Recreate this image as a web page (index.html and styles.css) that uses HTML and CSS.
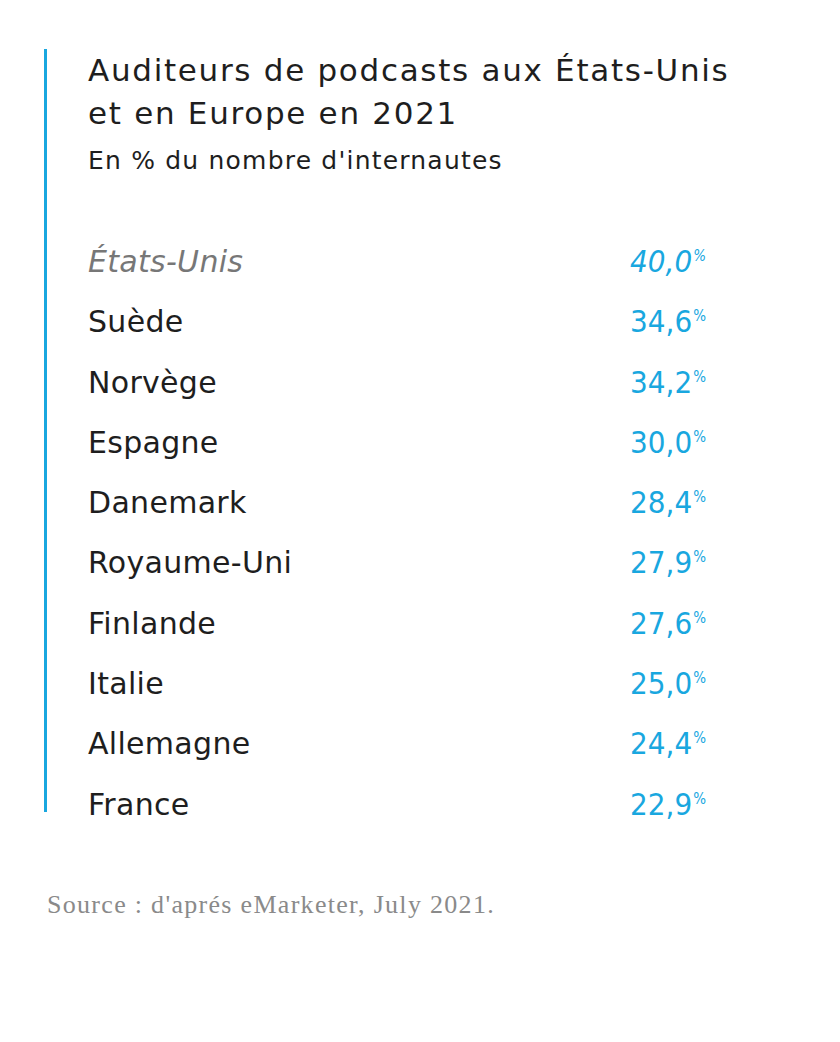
FILE: index.html
```html
<!DOCTYPE html>
<html lang="fr">
<head>
<meta charset="utf-8">
<title>Auditeurs de podcasts</title>
<link rel="stylesheet" href="styles.css">
</head>
<body>
<div class="page">
  <section class="card">
    <h1 class="title">Auditeurs de podcasts aux États-Unis<br>et en Europe en 2021</h1>
    <p class="subtitle">En % du nombre d'internautes</p>
    <ul class="rows">
      <li class="row featured"><span class="name">États-Unis</span><span class="val">40,0<sup>%</sup></span></li>
      <li class="row"><span class="name">Suède</span><span class="val">34,6<sup>%</sup></span></li>
      <li class="row"><span class="name">Norvège</span><span class="val">34,2<sup>%</sup></span></li>
      <li class="row"><span class="name">Espagne</span><span class="val">30,0<sup>%</sup></span></li>
      <li class="row"><span class="name">Danemark</span><span class="val">28,4<sup>%</sup></span></li>
      <li class="row"><span class="name">Royaume-Uni</span><span class="val">27,9<sup>%</sup></span></li>
      <li class="row"><span class="name">Finlande</span><span class="val">27,6<sup>%</sup></span></li>
      <li class="row"><span class="name">Italie</span><span class="val">25,0<sup>%</sup></span></li>
      <li class="row"><span class="name">Allemagne</span><span class="val">24,4<sup>%</sup></span></li>
      <li class="row"><span class="name">France</span><span class="val">22,9<sup>%</sup></span></li>
    </ul>
  </section>
  <p class="source">Source : d'aprés eMarketer, July 2021.</p>
</div>
</body>
</html>
```
FILE: styles.css
```css
html, body {
  margin: 0;
  padding: 0;
  background: #ffffff;
}
.page {
  width: 840px;
  height: 1042px;
  padding: 53px 0 0 44px;
  box-sizing: border-box;
  font-family: "DejaVu Sans", "Liberation Sans", sans-serif;
  color: #1e1e1e;
}
.card {
  border-left: 3px solid #19a7df;
  padding-left: 41px;
  width: 662px;
  box-sizing: border-box;
}
.title {
  margin: -4px 0 0;
  font-weight: 400;
  font-size: 31px;
  line-height: 43px;
  letter-spacing: 1.7px;
  white-space: nowrap;
}
.subtitle {
  margin: 9px 0 0;
  font-size: 25px;
  line-height: 34px;
  letter-spacing: 1.2px;
  white-space: nowrap;
}
.rows {
  list-style: none;
  margin: 63px 0 0;
  padding: 0;
}
.row {
  display: flex;
  justify-content: space-between;
  align-items: baseline;
  height: 60.3px;
  font-size: 30px;
  line-height: 40px;
}
.row:last-child {
  height: 28px;
}
.name {
  letter-spacing: 0.3px;
}
.row.featured .name {
  font-style: italic;
  color: #777777;
}
.row.featured .val {
  font-style: italic;
}
.val {
  color: #19a7df;
  font-family: "Liberation Sans Narrow", "DejaVu Sans Condensed", "Liberation Sans", sans-serif;
  font-size: 31px;
}
.val sup {
  font-family: "Liberation Sans Narrow", "DejaVu Sans Condensed", sans-serif;
  font-size: 15px;
  vertical-align: 0;
  position: relative;
  top: -11px;
  margin-left: 1px;
}
.source {
  margin: 78px 0 0 3px;
  font-family: "Liberation Serif", serif;
  font-size: 26px;
  line-height: 30px;
  letter-spacing: 1.3px;
  color: #8a8a8a;
}
```
